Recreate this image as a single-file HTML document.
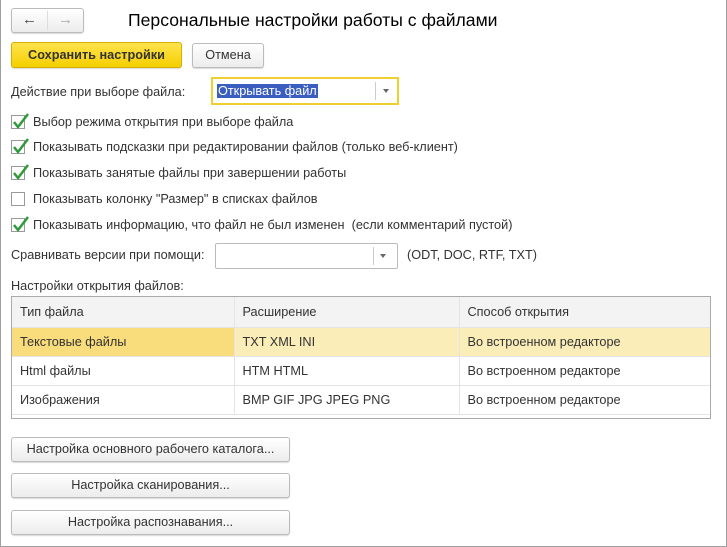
<!DOCTYPE html>
<html><head><meta charset="utf-8"><style>
*{box-sizing:border-box;margin:0;padding:0}
body{width:727px;height:547px;background:#fff;font-family:"Liberation Sans",Arial,sans-serif;font-size:12.7px;color:#333;position:relative;overflow:hidden}
.frame{position:absolute;left:0;top:0;width:727px;height:547px;border:1px solid #a0a0a0;border-top:none}
.a{position:absolute;white-space:nowrap}
.btn{position:absolute;border:1px solid #bbb;border-radius:3px;background:linear-gradient(#fff,#ececec);box-shadow:0 1px 1px rgba(0,0,0,.15);text-align:center;color:#333}
.cb{position:absolute;left:11px;width:14px;height:14px;border:1px solid #999;background:#fff}
.cb svg{position:absolute;left:0;top:-3px}
.lbl{position:absolute;left:33px}
table{border-collapse:collapse;width:100%}
td{height:29px;padding-left:8px;border-bottom:1px solid #e4e4e4;border-left:1px solid #e4e4e4}
td:first-child{border-left:none}
</style></head><body>
<div class="frame"></div>
<div class="btn" style="left:11px;top:8px;width:73px;height:25px;"></div>
<div class="a" style="left:47px;top:11px;width:1px;height:19px;background:#ddd"></div>
<div class="a" style="left:22px;top:11px;font-size:15px;font-weight:bold;color:#444">&#8592;</div>
<div class="a" style="left:58px;top:11px;font-size:15px;font-weight:bold;color:#aaa">&#8594;</div>
<div class="a" style="left:128px;top:10px;font-size:17.6px;color:#000">Персональные настройки работы с файлами</div>
<div class="btn" style="left:11px;top:42px;width:171px;height:26px;background:linear-gradient(#ffe34d,#f5cf00);border-color:#d4b000;font-weight:bold;line-height:24px;color:#333">Сохранить настройки</div>
<div class="btn" style="left:192px;top:43px;width:72px;height:25px;line-height:23px">Отмена</div>
<div class="a" style="left:11px;top:85px">Действие при выборе файла:</div>
<div class="a" style="left:211px;top:77px;width:188px;height:28px;border:2px solid #f0d030;background:#fff">
<span style="position:absolute;left:4px;top:5px;background:#3a5ec0;color:#fff;padding:0 1px">Открывать файл</span>
<div style="position:absolute;left:162px;top:3px;width:1px;height:18px;background:#ccc"></div>
<div style="position:absolute;left:170px;top:10px;border:3px solid transparent;border-top:4px solid #666"></div></div>
<div class="cb" style="top:115px"><svg width="18" height="18"><path d="M2 9l4 5L16 1" stroke="#2e9a3a" stroke-width="2.5" fill="none"/></svg></div><div class="a lbl" style="top:115px">Выбор режима открытия при выборе файла</div>
<div class="cb" style="top:140px"><svg width="18" height="18"><path d="M2 9l4 5L16 1" stroke="#2e9a3a" stroke-width="2.5" fill="none"/></svg></div><div class="a lbl" style="top:140px">Показывать подсказки при редактировании файлов (только веб-клиент)</div>
<div class="cb" style="top:166px"><svg width="18" height="18"><path d="M2 9l4 5L16 1" stroke="#2e9a3a" stroke-width="2.5" fill="none"/></svg></div><div class="a lbl" style="top:166px">Показывать занятые файлы при завершении работы</div>
<div class="cb" style="top:192px"></div><div class="a lbl" style="top:192px">Показывать колонку "Размер" в списках файлов</div>
<div class="cb" style="top:218px"><svg width="18" height="18"><path d="M2 9l4 5L16 1" stroke="#2e9a3a" stroke-width="2.5" fill="none"/></svg></div><div class="a lbl" style="top:218px">Показывать информацию, что файл не был изменен&nbsp; (если комментарий пустой)</div>
<div class="a" style="left:11px;top:248px">Сравнивать версии при помощи:</div>
<div class="a" style="left:215px;top:243px;width:183px;height:26px;border:1px solid #bbb;border-radius:2px;background:#fff">
<div style="position:absolute;left:157px;top:3px;width:1px;height:18px;background:#ccc"></div>
<div style="position:absolute;left:164px;top:10px;border:3px solid transparent;border-top:4px solid #666"></div></div>
<div class="a" style="left:407px;top:248px">(ODT, DOC, RTF, TXT)</div>
<div class="a" style="left:11px;top:279px">Настройки открытия файлов:</div>
<div class="a" style="left:11px;top:296px;width:700px;height:123px;border:1px solid #aaa">
<table>
<tr style="background:#f3f3f3"><td style="width:222px;height:30px">Тип файла</td><td style="width:225px">Расширение</td><td>Способ открытия</td></tr>
<tr style="background:#fbedb8"><td style="background:#f9dc7c">Текстовые файлы</td><td>TXT XML INI</td><td>Во встроенном редакторе</td></tr>
<tr><td>Html файлы</td><td>HTM HTML</td><td>Во встроенном редакторе</td></tr>
<tr><td>Изображения</td><td>BMP GIF JPG JPEG PNG</td><td>Во встроенном редакторе</td></tr>
</table></div>
<div class="btn" style="left:11px;top:437px;width:279px;height:25px;line-height:23px">Настройка основного рабочего каталога...</div>
<div class="btn" style="left:11px;top:473px;width:279px;height:25px;line-height:23px">Настройка сканирования...</div>
<div class="btn" style="left:11px;top:510px;width:279px;height:25px;line-height:23px">Настройка распознавания...</div>
</body></html>
